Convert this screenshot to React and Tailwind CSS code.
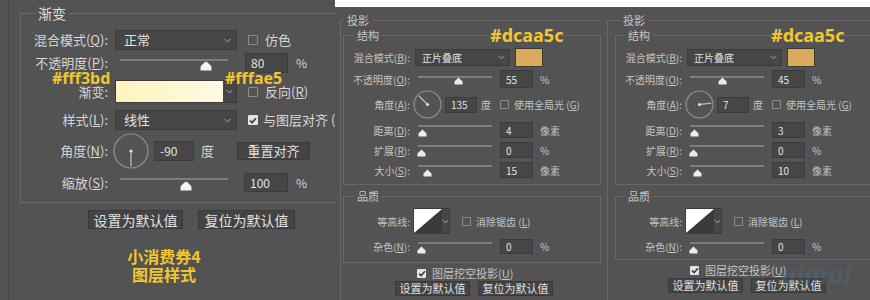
import React from "react";

function K({ t, k }) {
  return (
    <>
      {t}(<span className="underline underline-offset-1">{k}</span>):
    </>
  );
}

function Chevron() {
  return (
    <svg width="7" height="5" viewBox="0 0 7 5">
      <path d="M0.5 0.8 L3.5 3.8 L6.5 0.8" stroke="#a8a8a8" strokeWidth="1" fill="none" />
    </svg>
  );
}

function Thumb({ big }) {
  return big ? (
    <svg width="12" height="10" viewBox="0 0 12 10">
      <path d="M6 0.5 C7 0.5 11.5 5 11.5 6 L11.5 9.5 L0.5 9.5 L0.5 6 C0.5 5 5 0.5 6 0.5 Z" fill="#f2f2f2" />
    </svg>
  ) : (
    <svg width="9" height="8" viewBox="0 0 9 8">
      <path d="M4.5 0.5 L8.5 4.5 L8.5 7.5 L0.5 7.5 L0.5 4.5 Z" fill="#ececec" />
    </svg>
  );
}

function Slider({ className, pos, big, trackTop }) {
  return (
    <div className={`relative h-full ${className}`}>
      <div className={`absolute left-0 right-0 h-[2px] bg-[#7e7e7e] ${trackTop}`} />
      <div className={`absolute ${big ? "top-[8px]" : "top-[7px]"}`} style={{ left: pos }}>
        <Thumb big={big} />
      </div>
    </div>
  );
}

function Box({ className, children }) {
  return (
    <div className={`flex items-center border border-[#3b3b3b] bg-[#464646] pl-[5px] text-[#e2e2e2] ${className}`}>
      {children}
    </div>
  );
}

function Check({ on, className = "", small }) {
  const s = small ? "h-[9px] w-[9px]" : "h-[10px] w-[10px]";
  if (on)
    return (
      <span className={`flex items-center justify-center rounded-[1px] bg-[#e4e4e4] ${s} ${className}`}>
        <svg width="8" height="7" viewBox="0 0 8 7">
          <path d="M1 3.6 L3.1 5.6 L7 1.2" stroke="#3c3c3c" strokeWidth="1.6" fill="none" />
        </svg>
      </span>
    );
  return <span className={`rounded-[1px] border border-[#8c8c8c] ${s} ${className}`} />;
}

function Dial({ size, angle, className = "" }) {
  const c = size / 2;
  const r = c - 1;
  const a = (angle * Math.PI) / 180;
  const x2 = c + Math.cos(a) * (r - 1.5);
  const y2 = c - Math.sin(a) * (r - 1.5);
  return (
    <svg width={size} height={size} className={className}>
      <circle cx={c} cy={c} r={r} fill="none" stroke="#8e8e8e" strokeWidth="1.2" />
      <line x1={c} y1={c} x2={x2} y2={y2} stroke="#b8b8b8" strokeWidth="1.3" />
      <circle cx={c} cy={c} r="1.6" fill="#dedede" />
    </svg>
  );
}

function Btn({ className, children }) {
  return (
    <div className={`flex items-center justify-center border border-[#3a3a3a] bg-[#444444] text-[#e0e0e0] ${className}`}>
      {children}
    </div>
  );
}

function GradientPanel() {
  const lbl = "w-[87px] text-right";
  return (
    <div className="flex w-[335px] shrink-0 overflow-hidden pl-[8px]">
      <div className="flex flex-1 flex-col border-l border-[#474747] text-[13px] leading-[16px] text-[#d6d6d6]">
        <div className="relative ml-[11px] mt-[13px] h-[190px] w-[330px] shrink-0 border border-[#6a6a6a] pt-[16px]">
          <span className="absolute -top-[10px] left-[14px] bg-[#535353] px-[3px] text-[14px] leading-[18px] text-[#dedede]">渐变</span>

          <div className="flex h-[20px] items-center">
            <span className={lbl}><K t="混合模式" k="Q" /></span>
            <Box className="ml-[7px] h-[20px] w-[122px] justify-between pr-[5px] pl-[8px]">
              <span>正常</span>
              <Chevron />
            </Box>
            <Check className="ml-[11px]" />
            <span className="ml-[7px]">仿色</span>
          </div>

          <div className="mt-[3px] flex h-[20px] items-center">
            <span className={lbl}><K t="不透明度" k="P" /></span>
            <Slider className="ml-[12px] w-[108px]" trackTop="top-[6px]" pos={80} big />
            <Box className="ml-[17px] h-[20px] w-[43px] text-[12px]">80</Box>
            <span className="ml-[8px] text-[12px]">%</span>
          </div>

          <div className="relative mt-[7px] flex h-[23px] items-center">
            <span className="absolute -top-[10px] left-[31px] text-[16px] font-bold leading-[16px] text-[#f2c62e] font-['Noto_Sans',sans-serif]">#fff3bd</span>
            <span className="absolute -top-[10px] left-[204px] text-[16px] font-bold leading-[16px] text-[#f2c62e] font-['Noto_Sans',sans-serif]">#fffae5</span>
            <span className={lbl}>渐变:</span>
            <div className="ml-[7px] flex h-[23px] w-[122px] border border-[#3b3b3b]">
              <div className="h-full w-[107px] bg-linear-to-r from-[#fff3bd] to-[#fffae5]" />
              <div className="flex flex-1 items-center justify-center bg-[#464646]">
                <Chevron />
              </div>
            </div>
            <Check className="ml-[11px]" />
            <span className="ml-[7px]"><span>反向(</span><span className="underline underline-offset-1">R</span>)</span>
          </div>

          <div className="mt-[7px] flex h-[20px] items-center">
            <span className={lbl}><K t="样式" k="L" /></span>
            <Box className="ml-[7px] h-[20px] w-[122px] justify-between pr-[5px] pl-[8px]">
              <span>线性</span>
              <Chevron />
            </Box>
            <Check on className="ml-[11px]" />
            <span className="ml-[5px] whitespace-nowrap">与图层对齐 (I</span>
          </div>

          <div className="mt-[3px] flex h-[35px] items-center">
            <span className={lbl}><K t="角度" k="N" /></span>
            <Dial size={36} angle={-90} className="ml-[5px]" />
            <Box className="ml-[5px] h-[20px] w-[40px] text-[12px]">-90</Box>
            <span className="ml-[7px]">度</span>
            <Btn className="ml-[23px] h-[18px] w-[73px]">重置对齐</Btn>
          </div>

          <div className="mt-[5px] flex h-[19px] items-center">
            <span className={lbl}><K t="缩放" k="S" /></span>
            <Slider className="ml-[12px] w-[108px]" trackTop="top-[5px]" pos={60} big />
            <Box className="ml-[16px] h-[19px] w-[44px] text-[12px]">100</Box>
            <span className="ml-[8px] text-[12px]">%</span>
          </div>
        </div>

        <div className="ml-[79px] mt-[7px] flex gap-[15px] text-[14px]">
          <Btn className="h-[19px] w-[95px]">设置为默认值</Btn>
          <Btn className="h-[19px] w-[97px]">复位为默认值</Btn>
        </div>

        <div className="ml-[55px] mt-[18px] w-[200px] text-center text-[16px] font-bold leading-[18px] text-[#f2c62e]">
          <div>小消费券4</div>
          <div>图层样式</div>
        </div>
      </div>
    </div>
  );
}

function ShadowPanel({ p }) {
  const lbl = "w-[66px] text-right";
  return (
    <div className={`relative flex shrink-0 flex-col overflow-hidden text-[10px] leading-[13px] text-[#c4c4c4] ${p.w}`}>
      <div className={`relative mt-[13px] flex flex-1 flex-col border-t border-l border-[#676767] ${p.outer}`}>
        <span className={`absolute -top-[8px] bg-[#535353] px-[3px] text-[11px] leading-[14px] ${p.l1}`}>投影</span>

        <div className={`relative mt-[14px] h-[150px] shrink-0 border border-[#676767] ${p.inner}`}>
          <span className={`absolute -top-[8px] bg-[#535353] px-[3px] text-[11px] leading-[14px] ${p.l2}`}>结构</span>
          <span className={`absolute -top-[11px] text-[18px] font-bold leading-[20px] text-[#f2c62e] font-['Noto_Sans',sans-serif] ${p.hex}`}>#dcaa5c</span>

          <div className="mt-[12px] flex h-[19px] items-center">
            <span className={lbl}><K t="混合模式" k="B" /></span>
            <Box className="ml-[5px] h-[17px] w-[95px] justify-between pr-[4px] pl-[6px]">
              <span>正片叠底</span>
              <Chevron />
            </Box>
            <div className="ml-[5px] h-[19px] w-[28px] border border-[#3b3b3b] bg-[#dcaa5c]" />
          </div>

          <div className="mt-[3px] flex h-[18px] items-center">
            <span className={lbl}><K t="不透明度" k="O" /></span>
            <Slider className="ml-[8px] w-[74px]" trackTop="top-[6px]" pos={p.oPos} />
            <Box className="ml-[8px] h-[18px] w-[33px]">{p.opacity}</Box>
            <span className="ml-[7px]">%</span>
          </div>

          <div className="mt-[2px] flex h-[29px] items-center">
            <span className={lbl}><K t="角度" k="A" /></span>
            <Dial size={29} angle={p.angle} className="ml-[3px]" />
            <Box className="ml-[3px] h-[16px] w-[32px]">{p.angle}</Box>
            <span className="ml-[4px]">度</span>
            <Check small className="ml-[9px]" />
            <span className="ml-[5px] whitespace-nowrap">使用全局光 (<span className="underline underline-offset-1">G</span>)</span>
          </div>

          <div className="mt-[3px] flex h-[16px] items-center">
            <span className={lbl}><K t="距离" k="D" /></span>
            <Slider className="ml-[8px] w-[74px]" trackTop="top-[3px]" pos={p.dPos} />
            <Box className="ml-[8px] h-[16px] w-[33px]">{p.dist}</Box>
            <span className="ml-[7px]">像素</span>
          </div>

          <div className="mt-[4px] flex h-[16px] items-center">
            <span className={lbl}><K t="扩展" k="R" /></span>
            <Slider className="ml-[8px] w-[74px]" trackTop="top-[3px]" pos={-1} />
            <Box className="ml-[8px] h-[16px] w-[33px]">0</Box>
            <span className="ml-[7px]">%</span>
          </div>

          <div className="mt-[4px] flex h-[16px] items-center">
            <span className={lbl}><K t="大小" k="S" /></span>
            <Slider className="ml-[8px] w-[74px]" trackTop="top-[3px]" pos={p.sPos} />
            <Box className="ml-[8px] h-[16px] w-[33px]">{p.size}</Box>
            <span className="ml-[7px]">像素</span>
          </div>
        </div>

        <div className={`relative mt-[11px] shrink-0 border border-[#676767] ${p.q}`}>
          <span className={`absolute -top-[8px] bg-[#535353] px-[3px] text-[11px] leading-[14px] ${p.l2}`}>品质</span>

          <div className="mt-[11px] flex h-[26px] items-center">
            <span className={lbl}>等高线:</span>
            <div className="ml-[3px] flex h-[26px] w-[37px] border border-[#3b3b3b]">
              <svg width="28" height="24" viewBox="0 0 28 24">
                <rect width="28" height="24" fill="#3a3a3a" />
                <path d="M0 0 L28 0 L0 24 Z" fill="#ffffff" />
              </svg>
              <div className="flex flex-1 items-center justify-center bg-[#464646]">
                <Chevron />
              </div>
            </div>
            <Check small className="ml-[12px]" />
            <span className="ml-[5px] whitespace-nowrap">消除锯齿 (<span className="underline underline-offset-1">L</span>)</span>
          </div>

          <div className="mt-[5px] flex h-[15px] items-center">
            <span className={lbl}><K t="杂色" k="N" /></span>
            <Slider className="ml-[8px] w-[74px]" trackTop="top-[3px]" pos={-1} />
            <Box className="ml-[8px] h-[15px] w-[33px]">0</Box>
            <span className="ml-[7px]">%</span>
          </div>
        </div>

        <div className={`mt-[5px] flex h-[10px] items-center ${p.cb}`}>
          <Check on small />
          <span className="ml-[6px] whitespace-nowrap text-[11px]">图层挖空投影(<span className="underline underline-offset-1">U</span>)</span>
        </div>

        <div className={`mt-[3px] flex gap-[8px] text-[11px] ${p.btn}`}>
          <Btn className="h-[15px] w-[75px]">设置为默认值</Btn>
          <Btn className="h-[15px] w-[75px]">复位为默认值</Btn>
        </div>
      </div>
      {p.wm && (
        <span className="pointer-events-none absolute left-[180px] top-[252px] text-[26px] font-bold italic leading-[30px] text-[#4d74b0] opacity-25 font-['Noto_Sans',sans-serif]">uimui</span>
      )}
    </div>
  );
}

const MID = {
  w: "w-[266px]",
  outer: "ml-[5px]",
  inner: "ml-[2px] w-[258px]",
  q: "ml-[2px] w-[258px] h-[67px]",
  l1: "left-[3px]",
  l2: "left-[10px]",
  hex: "left-[146px]",
  cb: "ml-[76px]",
  btn: "ml-[54px]",
  opacity: 55, oPos: 36, angle: 135, dist: 4, dPos: 0, size: 15, sPos: 5, wm: false,
};

const RIGHT = {
  w: "w-[269px]",
  outer: "ml-[6px]",
  inner: "ml-[7px] w-[280px]",
  q: "ml-[7px] w-[280px] h-[64px]",
  l1: "left-[12px]",
  l2: "left-[9px]",
  hex: "left-[155px]",
  cb: "ml-[82px]",
  btn: "ml-[60px]",
  opacity: 45, oPos: 28, angle: 7, dist: 3, dPos: 0, size: 10, sPos: 3, wm: true,
};

export default function App() {
  return (
    <div className="flex h-[300px] w-[870px] overflow-hidden bg-[#535353] font-['Noto_Sans_CJK_SC','Noto_Sans',sans-serif]">
      <GradientPanel />
      <div className="flex w-[535px] shrink-0 flex-col">
        <div className="h-[7px] shrink-0 bg-white" />
        <div className="flex flex-1">
          <ShadowPanel p={MID} />
          <ShadowPanel p={RIGHT} />
        </div>
      </div>
    </div>
  );
}
